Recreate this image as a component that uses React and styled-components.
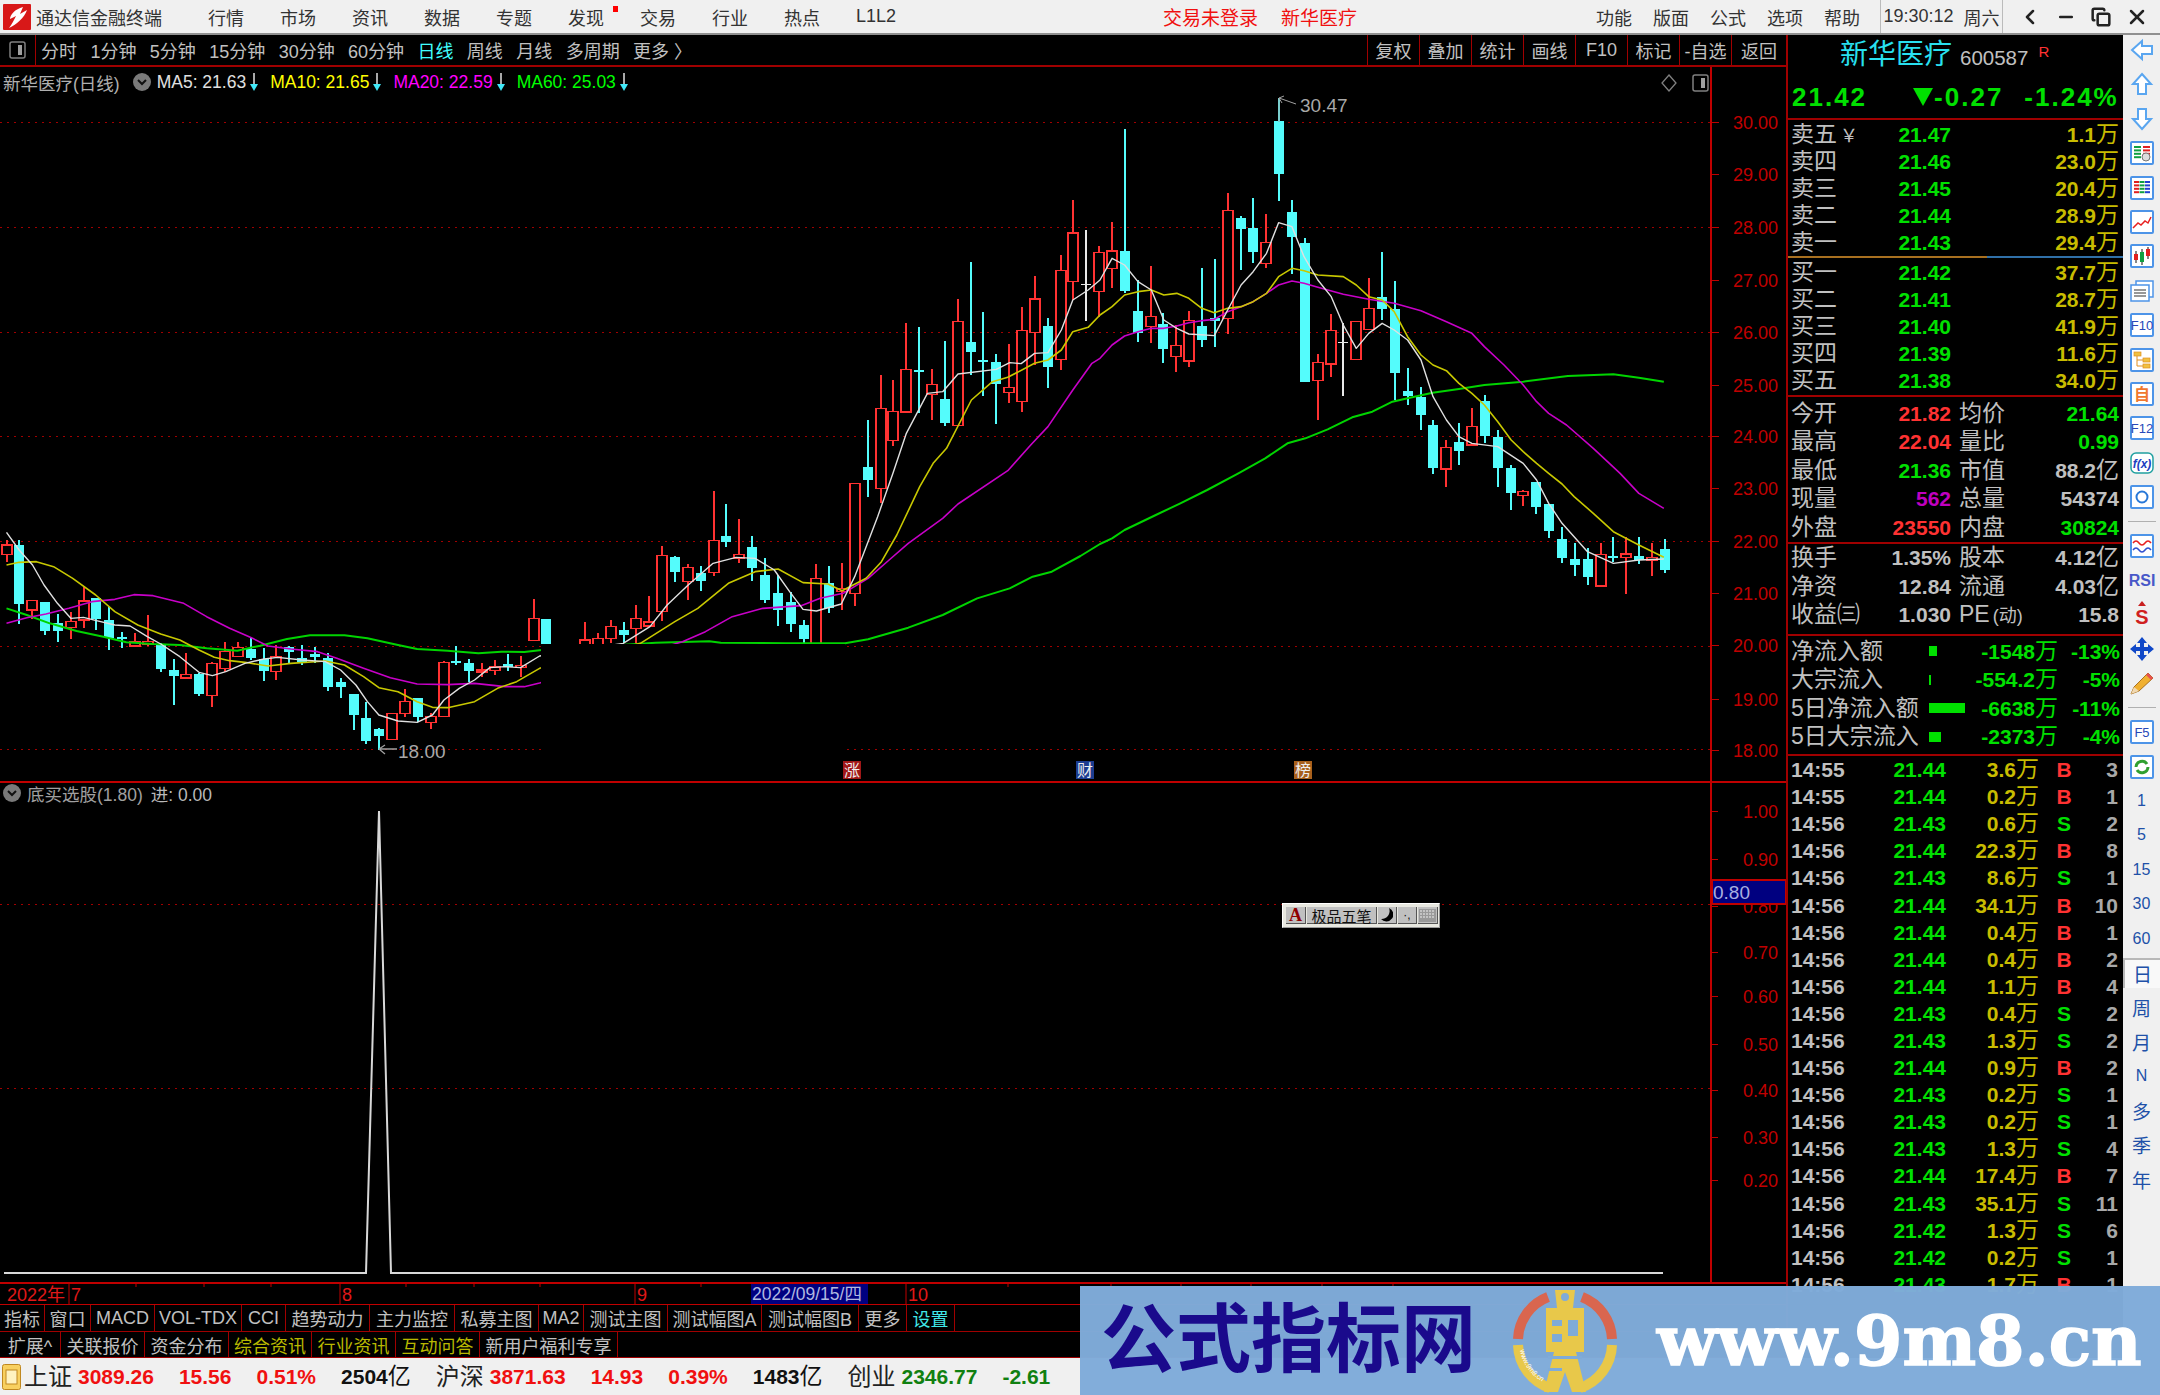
import React from "react";
import styled, { createGlobalStyle } from "styled-components";
import { ChevronLeft, Minus, Copy, X } from "lucide-react";

const FONT = `"Liberation Sans", "Noto Sans CJK SC", sans-serif`;
const RED_LINE = "#a00000";
const GRAY = "#c0c0c0";
const RED = "#ff3232";
const GREEN = "#00e000";
const GOLD = "#c8bc00";

const Global = createGlobalStyle`
  html, body { margin: 0; padding: 0; background: #000; overflow: hidden; }
  * { box-sizing: border-box; }
`;

const Page = styled.div`
  position: relative;
  width: 2160px;
  height: 1395px;
  display: flex;
  flex-direction: column;
  overflow: hidden;
  background: #000;
  font-family: ${FONT};
`;

/* title bar */
const TitleBar = styled.div`
  height: 35px;
  flex: none;
  display: flex;
  align-items: center;
  background: #f0f0f0;
  border-bottom: 2px solid #909090;
  color: #333;
  font-size: 18px;
  padding-left: 3px;
`;
const AppName = styled.span`
  margin-left: 5px;
`;
const Menu = styled.div`
  display: flex;
  align-items: center;
  gap: ${(p) => p.$gap}px;
  margin-left: ${(p) => p.$left}px;
`;
const MenuItem = styled.span`
  position: relative;
  &[data-dot]::after {
    content: "";
    position: absolute;
    right: -14px;
    top: 2px;
    width: 5px;
    height: 6px;
    background: #f00;
  }
`;
const Notice = styled.span`
  color: #f01010;
  font-size: 19px;
  margin-left: ${(p) => p.$left}px;
`;
const Clock = styled.div`
  margin-left: 20px;
  width: 123px;
  height: 33px;
  display: flex;
  align-items: center;
  justify-content: center;
  gap: 10px;
  border-left: 1px solid #bbb;
  border-right: 1px solid #bbb;
  font-size: 18px;
`;
const WindowButtons = styled.div`
  flex: 1;
  display: flex;
  justify-content: space-around;
  align-items: center;
  padding: 0 4px 0 8px;
  color: #222;
`;

/* main area */
const Middle = styled.div`
  height: 1323px;
  flex: none;
  display: flex;
`;
const LeftColumn = styled.div`
  position: relative;
  width: 1786px;
  flex: none;
  display: flex;
  flex-direction: column;
`;
const Toolbar = styled.div`
  height: 32px;
  flex: none;
  display: flex;
  border-bottom: 2px solid ${RED_LINE};
  color: ${GRAY};
  font-size: 18px;
`;
const PeriodIcon = styled.div`
  width: 36px;
  flex: none;
  display: flex;
  align-items: center;
  justify-content: center;
  border-right: 1px solid ${RED_LINE};
`;
const Periods = styled.div`
  display: flex;
  align-items: center;
  gap: 13.4px;
  margin-left: 5px;
`;
const Period = styled.span`
  color: ${(p) => (p.$active ? "#40ffff" : GRAY)};
`;
const ToolButtons = styled.div`
  margin-left: auto;
  display: flex;
`;
const ToolButton = styled.span`
  width: 52px;
  display: flex;
  align-items: center;
  justify-content: center;
  border-left: 1px solid ${RED_LINE};
  white-space: nowrap;
  &:last-child {
    width: 55px;
  }
`;

const Legend = styled.div`
  position: absolute;
  left: 3px;
  top: ${(p) => p.$top}px;
  display: flex;
  align-items: center;
  height: 24px;
  color: #b0b0b0;
  font-size: 17.5px;
  white-space: nowrap;
`;
const LegendValue = styled.span`
  display: flex;
  align-items: center;
  gap: 4px;
  margin-left: ${(p) => p.$gap}px;
  color: ${(p) => p.$color};
`;
const Chevron = styled.span`
  width: 18px;
  height: 18px;
  margin-left: ${(p) => p.$left}px;
  border-radius: 50%;
  background: #7a7a7a;
  display: flex;
  align-items: center;
  justify-content: center;
`;
const CornerIcons = styled.div`
  position: absolute;
  left: 1661px;
  top: 39px;
  display: flex;
  gap: 15px;
  align-items: center;
`;
const ChartSvg = styled.svg`
  display: block;
  flex: none;
`;
const IndicatorPane = styled.div`
  position: relative;
  flex: none;
  height: 501px;
`;
const ImeBar = styled.div`
  position: absolute;
  left: 1282px;
  top: 122px;
  width: 158px;
  height: 25px;
  padding: 3px;
  display: flex;
  gap: 1px;
  background: #e8e8e0;
  border: 1px solid #fff;
  border-right-color: #999;
  border-bottom-color: #999;
`;
const ImeCell = styled.span`
  width: ${(p) => p.$width}px;
  flex: none;
  display: flex;
  align-items: center;
  justify-content: center;
  background: #c0c0c0;
  border-right: 1px solid #555;
  border-bottom: 1px solid #555;
  font-size: ${(p) => p.$size || 15}px;
  font-weight: ${(p) => (p.$bold ? 700 : 400)};
  font-family: ${(p) => (p.$bold ? `"Liberation Serif", serif` : FONT)};
  color: ${(p) => p.$color || "#111"};
`;

const TabRow = styled.div`
  height: ${(p) => p.$height}px;
  flex: none;
  display: flex;
  border-bottom: 1px solid ${RED_LINE};
  font-size: 18px;
  white-space: nowrap;
`;
const Tab = styled.span`
  width: ${(p) => p.$width}px;
  display: flex;
  align-items: center;
  justify-content: center;
  border-right: 1px solid ${RED_LINE};
  color: ${(p) => p.$color || GRAY};
`;

/* quote panel */
const Panel = styled.div`
  width: 337px;
  flex: none;
  border-left: 2px solid ${RED_LINE};
  color: ${GRAY};
  font-size: 21px;
  line-height: 1;
  overflow: hidden;
`;
const PanelHeader = styled.div`
  height: 85px;
  border-bottom: 2px solid ${RED_LINE};
`;
const NameRow = styled.div`
  height: 40px;
  display: flex;
  align-items: center;
  padding-left: 52px;
`;
const StockName = styled.span`
  color: #28e0f0;
  font-size: 28px;
`;
const StockCode = styled.span`
  margin-left: 8px;
  font-size: 20.5px;
  position: relative;
  top: 3px;
`;
const RMark = styled.sup`
  margin-left: 10px;
  color: ${RED};
  font-size: 15px;
  position: relative;
  top: -4px;
`;
const PriceRow = styled.div`
  height: 43px;
  display: flex;
  align-items: center;
  color: ${GREEN};
  font-size: 26px;
  font-weight: 700;
  letter-spacing: 2px;
  padding-left: 4px;
`;
const PriceChange = styled.span`
  display: flex;
  align-items: center;
  margin-left: ${(p) => p.$left}px;
`;
const Section = styled.div`
  padding: ${(p) => p.$top || 0}px 0 ${(p) => p.$bottom || 0}px 3px;
  border-bottom: ${(p) => (p.$plain ? "none" : `2px solid ${RED_LINE}`)};
`;
const SplitLine = styled.div`
  height: 2px;
  background: linear-gradient(to right, #a87020 199px, #3070a8 199px);
`;
const Row = styled.div`
  height: ${(p) => p.$height}px;
  display: grid;
  grid-template-rows: ${(p) => p.$height}px;
  grid-template-columns: ${(p) => p.$columns};
  align-items: center;
  white-space: nowrap;
  font-weight: 700;
`;
const Label = styled.span`
  font-size: 23px;
  font-weight: 400;
  margin-left: ${(p) => p.$left || 0}px;
  color: ${GRAY};
  & small {
    font-size: 18px;
    margin-left: 3px;
  }
`;
const Value = styled.span`
  text-align: ${(p) => p.$align || "right"};
  color: ${(p) => p.$color || GRAY};
  font-size: 21px;
  & i {
    font-style: normal;
    font-weight: 400;
    font-size: 23px;
  }
`;
const FlowBar = styled.span`
  display: block;
  height: 10px;
  background: #00e000;
`;

/* side icons */
const SideBar = styled.div`
  width: 37px;
  flex: none;
  display: flex;
  flex-direction: column;
  align-items: center;
  gap: 4.4px;
  background: #f0f0f0;
  color: #2050a8;
`;
const SideItem = styled.div`
  width: 100%;
  height: 30px;
  flex: none;
  display: flex;
  align-items: center;
  justify-content: center;
  font-size: ${(p) => p.$size || 16}px;
  ${(p) =>
    p.$active &&
    `background:#f9f9f9;border-top:2px solid #b8b8b8;border-left:2px solid #b8b8b8;`}
`;
const SideSep = styled.div`
  height: 10px;
  width: 28px;
  flex: none;
  background: linear-gradient(#b0b0b0, #b0b0b0) center / 100% 1px no-repeat;
`;

/* status bar */
const StatusBar = styled.div`
  height: 37px;
  flex: none;
  display: flex;
  align-items: center;
  gap: 25px;
  background: #f0f0f0;
  padding-left: 2px;
  font-size: 21px;
  font-weight: 700;
  line-height: 1;
  white-space: nowrap;
  color: #111;
`;
const StatusGroup = styled.span`
  display: flex;
  align-items: center;
  gap: 6px;
`;
const StatusIcon = styled.svg`
  margin-right: -3px;
`;
const StatusLabel = styled.span`
  font-size: 24px;
  font-weight: 400;
  color: #222;
`;
const StatusValue = styled.span`
  color: ${(p) => p.$color || "#111"};
  & i {
    font-style: normal;
    font-weight: 400;
    font-size: 23px;
  }
`;

/* watermark over the bottom right */
const Watermark = styled.div`
  position: absolute;
  left: 1080px;
  top: 1286px;
  width: 1080px;
  height: 109px;
  display: flex;
  align-items: center;
  background: rgba(127, 171, 217, 0.98);
`;
const MarkTitle = styled.span`
  margin-left: 21px;
  width: 375px;
  flex: none;
  color: #1a0a8c;
  font-size: 75px;
  line-height: 1;
  font-weight: 700;
  white-space: nowrap;
`;
const MarkLogo = styled.svg`
  margin-left: 36px;
  flex: none;
`;
const MarkUrl = styled.span`
  margin-left: 39px;
  color: #fff;
  font-family: "DejaVu Serif", serif;
  font-size: 69.6px;
  line-height: 1;
  font-weight: 700;
  -webkit-text-stroke: 1.5px #fff;
  white-space: nowrap;
`;

/* chart data, traced per region: each region has its own x scale and y base */
const zoomed = (scaleX, baseX, baseY) => (pts) =>
  pts.map(([u, v]) => [u / scaleX + baseX, v / 3 + baseY]);
const west = zoomed(2.613, 0, 500);
const mid = zoomed(2.613, 560, 200);
const east = zoomed(2.24, 1100, 80);

const candleRows = (base, rows) =>
  rows.map(([k, t, b, h, l]) => ({
    kind: k,
    top: base + t / 3,
    bottom: base + b / 3,
    high: base + h / 3,
    low: base + l / 3,
  }));

const CANDLES = [
  ...candleRows(500, [
    ["r",135,163,120,185],["c",135,312,120,372],["r",302,330,302,358],["c",306,394,306,404],
    ["c",369,394,342,427],["r",365,382,335,417],["r",303,360,258,385],["c",293,358,293,390],
    ["c",360,415,320,450],["c",410,418,395,445],["r",425,438,400,440],["r",425,434,345,437],
    ["c",435,507,428,516],["c",509,528,476,615],["r",523,534,458,535],["c",521,583,518,587],
    ["r",491,587,487,620],["r",455,506,427,515],["r",442,470,427,470],["c",448,475,410,480],
    ["c",478,512,445,543],["r",470,515,435,540],["c",441,457,437,490],["c",473,485,435,495],
    ["c",463,472,440,490],["c",473,562,460,572],["c",545,561,535,593],["c",581,646,581,690],
    ["c",653,722,605,733],["c",688,708,685,750],["r",640,718,640,718],["r",604,640,568,650],
    ["c",594,652,594,665],["r",650,668,640,688],["r",487,650,483,652],["c",482,490,437,495],
    ["c",490,512,477,545],["r",510,515,490,530],["r",501,511,480,525],["c",492,500,463,513],
    ["r",497,503,467,530],["r",356,421,297,421],["c",356,432,356,432],
  ]),
  null,
  null,
  ...candleRows(200, [
    ["r",1320,1340,1265,1340],["r",1315,1340,1300,1340],["r",1279,1315,1260,1330],["c",1291,1304,1265,1330],
    ["r",1256,1285,1215,1330],["r",1266,1278,1188,1282],["r",1067,1235,1038,1262],["c",1071,1115,1067,1147],
    ["r",1103,1145,1093,1200],["c",1120,1142,1097,1173],["r",1022,1117,872,1128],["c",1007,1025,912,1042],
    ["r",1063,1075,958,1088],["c",1040,1105,1007,1142],["c",1125,1200,1075,1208],["c",1180,1231,1125,1277],
    ["c",1206,1272,1175,1295],["c",1274,1317,1260,1330],["r",1135,1340,1092,1340],["c",1148,1225,1098,1238],
    ["r",1165,1175,1088,1230],["r",851,1181,851,1218],["c",800,840,660,890],["r",626,865,526,910],
    ["r",635,722,540,737],["r",509,636,368,636],["c",509,516,382,640],["r",554,583,508,660],
    ["c",598,670,422,678],["r",365,677,296,677],["c",427,457,187,525],["c",481,485,337,588],
    ["c",485,551,463,673],["r",563,577,432,610],["r",392,604,320,637],["r",297,397,229,495],
    ["c",377,501,355,565],["r",212,479,166,511],["r",99,244,0,300],["w",253,253,90,362],
    ["r",158,275,138,350],
  ]),
  ...candleRows(80, [
    ["r",513,565,427,625],["c",513,632,147,640],["c",692,758,600,785],["r",710,740,557,790],
    ["c",733,808,700,850],["r",797,830,735,876],["r",722,843,692,862],["c",738,780,565,800],
    ["c",715,722,538,800],["r",392,716,340,763],["c",413,448,408,570],["c",445,515,354,548],
    ["r",487,550,403,565],["c",124,281,55,362],["c",395,470,360,583],["c",490,907,475,907],
    ["r",847,902,823,1020],["r",752,852,702,890],["w",788,788,730,948],["r",725,838,725,838],
    ["r",685,748,593,748],["c",652,686,517,720],["c",688,880,602,960],["c",932,947,863,975],
    ["c",950,1005,922,1050],["c",1035,1163,1020,1182],["r",1103,1167,1080,1222],["c",1085,1113,1030,1155],
    ["r",1040,1095,985,1095],["c",962,1068,945,1090],["c",1070,1163,1050,1222],["c",1165,1240,1155,1290],
    ["r",1234,1247,1230,1277],["c",1205,1280,1205,1303],["c",1273,1352,1273,1375],["c",1377,1433,1340,1448],
    ["c",1436,1455,1390,1488],["c",1436,1492,1405,1515],["r",1423,1518,1390,1518],["c",1427,1430,1372,1445],
    ["r",1422,1433,1372,1542],["c",1427,1440,1372,1452],["r",1432,1440,1390,1488],["c",1408,1470,1377,1478],
  ]),
];

const MA5 = [
  ...west([[17,97],[50,150],[85,195],[115,255],[150,310],[185,355],[218,352],[252,362],[300,375],[340,378],[385,410],[420,432],[470,470],[520,517],[555,527],[590,515],[640,490],[690,477],[725,472],[790,480],[850,485],[890,510],[930,555],[960,605],[990,645],[1040,663],[1090,667],[1130,645],[1160,600],[1200,565],[1240,540],[1280,503],[1320,500],[1360,503],[1410,468]]),
  ...mid([[165,1330],[235,1280],[280,1215],[335,1155],[400,1090],[460,1072],[510,1075],[560,1110],[600,1175],[635,1228],[670,1233],[735,1212],[770,1130],[830,950],[870,820],[905,700],[960,580],[1000,575],[1040,522],[1140,508],[1175,488],[1205,491],[1240,460],[1275,458],[1310,390],[1340,300],[1380,270]]),
  ...east([[0,600],[27,535],[55,555],[85,605],[115,630],[143,720],[172,745],[199,762],[256,767],[286,690],[316,615],[343,575],[373,520],[400,428],[430,440],[457,530],[488,600],[518,650],[545,735],[574,805],[602,760],[632,730],[659,750],[689,780],[719,840],[746,950],[776,1020],[804,1070],[833,1090],[891,1100],[948,1150],[978,1200],[1005,1270],[1035,1330],[1092,1415],[1150,1450],[1207,1440],[1263,1437]]),
];
const MA10 = [
  ...west([[17,195],[50,187],[95,185],[140,200],[190,235],[250,285],[300,335],[360,375],[420,402],[470,420],[520,450],[560,472],[600,482],[640,487],[700,498],[760,490],[850,483],[900,495],[950,530],[990,563],[1040,575],[1090,605],[1130,622],[1170,623],[1240,605],[1300,565],[1350,545],[1410,505]]),
  ...mid([[210,1330],[300,1265],[360,1225],[440,1150],[510,1115],[570,1107],[635,1148],[700,1152],[737,1172],[800,1135],[840,1085],[880,1005],[940,860],[975,790],[1010,745],[1075,600],[1130,545],[1170,532],[1240,490],[1275,480],[1310,450],[1340,395],[1380,382]]),
  ...east([[0,705],[27,680],[55,645],[85,635],[115,630],[143,645],[172,640],[199,655],[228,685],[256,698],[286,685],[316,680],[343,665],[373,640],[400,590],[430,565],[457,572],[488,585],[545,590],[574,615],[602,650],[632,660],[659,695],[689,770],[719,825],[746,855],[776,872],[804,910],[833,940],[861,975],[891,1025],[921,1080],[948,1115],[978,1150],[1005,1180],[1035,1212],[1062,1250],[1105,1300],[1150,1355],[1207,1395],[1263,1432]]),
];
const MA20 = [
  ...west([[17,370],[70,353],[120,342],[180,325],[240,305],[300,298],[350,284],[400,287],[480,310],[540,350],[600,385],[660,415],[700,438],[760,447],[830,455],[880,475],[950,505],[1020,533],[1090,552],[1170,554],[1240,550],[1320,560],[1370,560],[1410,549]]),
  ...mid([[320,1325],[380,1295],[450,1250],[530,1225],[630,1217],[680,1195],[740,1180],[805,1135],[860,1080],[910,1030],[1000,955],[1040,912],[1170,812],[1230,735],[1275,680],[1340,570],[1390,490]]),
  ...east([[0,835],[27,795],[55,768],[85,755],[115,745],[143,745],[172,738],[199,728],[228,722],[256,718],[286,695],[316,680],[343,665],[373,640],[400,615],[430,603],[457,610],[488,622],[545,643],[602,658],[659,670],[719,692],[776,725],[833,760],[861,800],[905,855],[948,915],[978,965],[1005,1000],[1045,1035],[1105,1105],[1165,1180],[1207,1240],[1263,1285]]),
];
const MA60 = [
  ...west([[17,325],[70,345],[130,370],[200,393],[270,410],[330,427],[400,432],[470,435],[540,445],[620,452],[680,437],[750,417],[810,406],[900,406],[960,415],[1040,435],[1090,447],[1170,452],[1250,460],[1310,455],[1370,456],[1410,451]]),
  ...mid([[250,1328],[390,1324],[420,1328],[590,1330],[745,1330],[805,1318],[910,1283],[1000,1245],[1090,1195],[1175,1165],[1235,1130],[1285,1115],[1360,1068]]),
  ...east([[0,1392],[27,1375],[55,1350],[125,1305],[180,1270],[240,1230],[310,1180],[370,1135],[420,1090],[460,1075],[510,1048],[565,1012],[610,995],[655,965],[689,955],[745,938],[804,927],[861,915],[948,905],[1048,888],[1150,883],[1207,893],[1263,905]]),
];
const LINES = [
  { pts: MA60, color: "#00d400", width: 2 },
  { pts: MA20, color: "#c800c8", width: 1.6 },
  { pts: MA10, color: "#c8c800", width: 1.6 },
  { pts: MA5, color: "#e0e0e0", width: 1.4 },
];

const PRICE_TICKS = [
  ["30.00",122],["29.00",174],["28.00",227],["27.00",280],["26.00",332],["25.00",385],["24.00",436],
  ["23.00",488],["22.00",541],["21.00",593],["20.00",645],["19.00",699],["18.00",750],
];
const GRID_Y = [122, 227, 332, 436, 541, 646, 749];
const INDICATOR_TICKS = [
  ["1.00",811],["0.90",859],["0.80",906],["0.70",952],["0.60",996],["0.50",1044],["0.40",1090],["0.30",1137],["0.20",1180],
];
const AXIS_RED = "#c00000";
const BADGES = [
  ["涨", 852, "#a01818"],
  ["财", 1085, "#1c3c90"],
  ["榜", 1303, "#a8601c"],
];

function Candle({ c, i }) {
  const x = Math.round(6.5 + 12.855 * i);
  const w = 10;
  const { kind, top, bottom, high, low } = c;
  const color = kind === "r" ? "#ff3232" : kind === "c" ? "#54fcfc" : "#e8e8e8";
  if (kind === "w") {
    return (
      <g stroke={color} strokeWidth="1.5" shapeRendering="crispEdges">
        <line x1={x} x2={x} y1={high} y2={low} />
        <line x1={x - 5} x2={x + 5} y1={top} y2={top} />
      </g>
    );
  }
  return (
    <g shapeRendering="crispEdges">
      <line x1={x} x2={x} y1={high} y2={top} stroke={color} strokeWidth="1.5" />
      <line x1={x} x2={x} y1={bottom} y2={low} stroke={color} strokeWidth="1.5" />
      <rect
        x={x - w / 2}
        y={top}
        width={w}
        height={Math.max(bottom - top, 2)}
        fill={kind === "c" ? color : "#000"}
        stroke={kind === "c" ? "none" : color}
        strokeWidth="1.5"
      />
    </g>
  );
}

function PriceChart() {
  return (
    <ChartSvg width="1786" height="714" viewBox="0 67 1786 714">
      {GRID_Y.map((y) => (
        <line key={y} x1="0" x2="1711" y1={y} y2={y} stroke="#a00000" strokeDasharray="2 5" shapeRendering="crispEdges" />
      ))}
      {CANDLES.map((c, i) => c && <Candle key={i} c={c} i={i} />)}
      {LINES.map((l) => (
        <polyline key={l.color} points={l.pts.map((p) => p.join(",")).join(" ")} fill="none" stroke={l.color} strokeWidth={l.width} strokeLinejoin="round" />
      ))}
      <rect x="541" y="644" width="304" height="116" fill="#000" />
      <path d="M1279 98 L1279 122 M1279 98 L1296 104 M1279 98 L1284 96 M1279 98 L1282 103" stroke="#a0a0a0" fill="none" />
      <text x="1300" y="112" fill="#a8a8a8" fontSize="19" fontFamily={FONT}>30.47</text>
      <path d="M379 749 L397 749 M379 749 L385 745 M379 749 L385 754" stroke="#a0a0a0" fill="none" strokeWidth="1.3" />
      <text x="398" y="758" fill="#a8a8a8" fontSize="19" fontFamily={FONT}>18.00</text>
      {BADGES.map(([t, x, bg]) => (
        <g key={t}>
          <rect x={x - 9} y="761" width="18" height="18" fill={bg} />
          <text x={x} y="776" textAnchor="middle" fill="#eee" fontSize="16" fontFamily={FONT}>{t}</text>
        </g>
      ))}
      <line x1="1711" x2="1711" y1="67" y2="781" stroke={AXIS_RED} strokeWidth="2" />
      {PRICE_TICKS.map(([t, y]) => (
        <g key={t}>
          <line x1="1711" x2="1719" y1={y} y2={y} stroke={AXIS_RED} shapeRendering="crispEdges" />
          <text x="1778" y={y + 7} textAnchor="end" fill={AXIS_RED} fontSize="18" fontFamily={FONT}>{t}</text>
        </g>
      ))}
    </ChartSvg>
  );
}

function IndicatorChart() {
  return (
    <ChartSvg width="1786" height="501" viewBox="0 781 1786 501">
      <line x1="0" x2="1786" y1="782" y2="782" stroke={AXIS_RED} strokeWidth="2" />
      {[904, 1088].map((y) => (
        <line key={y} x1="0" x2="1711" y1={y} y2={y} stroke="#a00000" strokeDasharray="2 5" shapeRendering="crispEdges" />
      ))}
      <polyline points="4,1273 366,1273 379,811 391,1273 1663,1273" fill="none" stroke="#d8d8d8" strokeWidth="2" />
      <line x1="1711" x2="1711" y1="781" y2="1282" stroke={AXIS_RED} strokeWidth="2" />
      {INDICATOR_TICKS.map(([t, y]) => (
        <g key={t}>
          <line x1="1711" x2="1718" y1={y} y2={y} stroke={AXIS_RED} shapeRendering="crispEdges" />
          <text x="1778" y={y + 7} textAnchor="end" fill={AXIS_RED} fontSize="18" fontFamily={FONT}>{t}</text>
        </g>
      ))}
      <rect x="1712" y="880" width="74" height="24" fill="#000080" stroke={AXIS_RED} strokeWidth="2" />
      <text x="1713" y="899" fill="#a8b0e0" fontSize="19" fontFamily={FONT}>0.80</text>
    </ChartSvg>
  );
}

const DATE_TICKS = [136, 204, 271, 406, 474, 540, 701, 1008, 1111, 1181, 1251, 1322, 1393];
const DATE_MARKS = [["7", 69], ["8", 340], ["9", 635], ["10", 906]];

function DateAxis() {
  return (
    <ChartSvg width="1786" height="23" viewBox="0 1282 1786 23">
      <line x1="0" x2="1786" y1="1283" y2="1283" stroke={AXIS_RED} strokeWidth="2" />
      <line x1="0" x2="1786" y1="1304.5" y2="1304.5" stroke={AXIS_RED} />
      {DATE_TICKS.map((x) => (
        <line key={x} x1={x} x2={x} y1="1283" y2="1287" stroke={AXIS_RED} />
      ))}
      <text x="7" y="1301" fill="#e01818" fontSize="18" fontFamily={FONT}>2022年</text>
      {DATE_MARKS.map(([t, x]) => (
        <g key={t}>
          <line x1={x} x2={x} y1="1283" y2="1304" stroke={AXIS_RED} />
          <text x={x + 2} y="1301" fill="#e01818" fontSize="18" fontFamily={FONT}>{t}</text>
        </g>
      ))}
      <rect x="751" y="1284" width="117" height="20" fill="#000080" />
      <text x="752" y="1300" fill="#b0b8e0" fontSize="17.5" fontFamily={FONT}>2022/09/15/四</text>
    </ChartSvg>
  );
}

const PanelIcon = () => (
  <svg width="17" height="18" viewBox="0 0 17 18">
    <rect x="1" y="1" width="15" height="16" rx="2" fill="none" stroke="#808080" strokeWidth="1.5" />
    <rect x="9" y="4" width="4" height="10" fill="#a0a0a0" />
  </svg>
);

const DownArrow = () => (
  <svg width="8" height="20" viewBox="0 0 8 20">
    <line x1="4" x2="4" y1="1" y2="13" stroke="#e0e0e0" strokeWidth="1.5" />
    <path d="M0 12 H8 L4 19 Z" fill="#40e8f8" />
  </svg>
);

const ChevronDown = () => (
  <svg width="12" height="12" viewBox="0 0 12 12">
    <path d="M2 4 L6 8 L10 4" fill="none" stroke="#111" strokeWidth="2" />
  </svg>
);

const DropTriangle = () => (
  <svg width="21" height="20" viewBox="0 0 21 20">
    <path d="M0 1 H20 L10 19 Z" fill={GREEN} />
  </svg>
);

/* side bar drawings */
const Frame = ({ children, width = 24, height = 24 }) => (
  <svg width={width} height={height} viewBox="0 0 24 24">
    <rect x="1" y="1" width="22" height="22" rx="1" fill="#fff" stroke="#4d94e8" strokeWidth="2" />
    {children}
  </svg>
);
const Arrow = ({ d }) => (
  <svg width="24" height="24" viewBox="0 0 24 24">
    <path d={d} fill="#fff" stroke="#5aa6f0" strokeWidth="2" strokeLinejoin="miter" />
  </svg>
);
const Rows = ({ x, color, n = 4, w = 5 }) =>
  Array.from({ length: n }, (_, i) => (
    <rect key={i} x={x} y={5 + i * 3.4} width={w} height="2" fill={color} />
  ));
const FKey = ({ t }) => (
  <Frame>
    <text x="12" y="17" textAnchor="middle" fontSize="13" fill="#2848b8" fontFamily={FONT}>{t}</text>
  </Frame>
);

const SIDE_TOP = [
  <Arrow d="M2 12 L12 3 V8 H22 V16 H12 V21 Z" />,
  <Arrow d="M12 2 L21 12 H16 V22 H8 V12 H3 Z" />,
  <Arrow d="M12 22 L21 12 H16 V2 H8 V12 H3 Z" />,
  <Frame>
    <Rows x={4} color="#10a040" w={7} />
    <Rows x={13} color="#e02020" w={7} />
    <circle cx="16" cy="16" r="4" fill="#ddd" stroke="#777" />
  </Frame>,
  <Frame>
    <Rows x={4} color="#e02020" />
    <Rows x={9.5} color="#10a040" />
    <Rows x={15} color="#2040d0" />
  </Frame>,
  <Frame>
    <path d="M3 18 L8 13 L11 15 L15 11 L18 13 L21 7" fill="none" stroke="#e82020" strokeWidth="1.5" />
  </Frame>,
  <Frame>
    <path d="M6 7 V19 M12 5 V21 M18 3 V15" stroke="#111" />
    <rect x="4" y="10" width="4" height="6" fill="#e02020" />
    <rect x="10" y="8" width="4" height="10" fill="#10a040" />
    <rect x="16" y="5" width="4" height="7" fill="#e02020" />
  </Frame>,
  <svg width="24" height="24" viewBox="0 0 24 24">
    <rect x="6" y="2" width="17" height="16" fill="#fff" stroke="#4d94e8" strokeWidth="1.5" />
    <rect x="1" y="6" width="18" height="16" fill="#fff" stroke="#4d94e8" strokeWidth="1.5" />
    <path d="M4 11 H16 M4 14 H16 M4 17 H16" stroke="#777" strokeWidth="1.5" />
  </svg>,
  <FKey t="F10" />,
  <Frame>
    <rect x="4" y="4" width="7" height="4" fill="#f0c040" stroke="#e09020" strokeWidth=".7" />
    <rect x="13" y="10" width="7" height="4" fill="#f0c040" stroke="#e09020" strokeWidth=".7" />
    <rect x="13" y="16" width="7" height="4" fill="#f0c040" stroke="#e09020" strokeWidth=".7" />
    <path d="M7 8 V18 H13 M7 12 H13" fill="none" stroke="#e09020" />
  </Frame>,
  <Frame>
    <text x="12" y="18" textAnchor="middle" fontSize="16" fontWeight="700" fill="#f07830" fontFamily={FONT}>自</text>
  </Frame>,
  <FKey t="F12" />,
  <svg width="24" height="24" viewBox="0 0 24 24">
    <rect x="1" y="2" width="22" height="20" rx="5" fill="#fff" stroke="#20a0a0" strokeWidth="1.5" />
    <text x="12" y="17" textAnchor="middle" fontSize="12" fontStyle="italic" fontWeight="700" fill="#2040c0" fontFamily={FONT}>f(x)</text>
  </svg>,
  <Frame>
    <circle cx="12" cy="12" r="5.5" fill="none" stroke="#2878d8" strokeWidth="2" />
  </Frame>,
];
const SIDE_MID = [
  <Frame>
    <path d="M3 9 Q6 5 9 9 T15 9 T21 9" fill="none" stroke="#e82020" strokeWidth="1.5" />
    <path d="M3 16 Q6 12 9 16 T15 16 T21 16" fill="none" stroke="#3050d0" strokeWidth="1.5" />
  </Frame>,
  <svg width="28" height="24" viewBox="0 0 28 24">
    <text x="14" y="18" textAnchor="middle" fontSize="16" fontWeight="700" fill="#4858c8" fontFamily={FONT}>RSI</text>
  </svg>,
  <svg width="24" height="28" viewBox="0 0 24 28">
    <path d="M12 0 L16 5 H8 Z" fill="#c82020" />
    <text x="12" y="23" textAnchor="middle" fontSize="20" fontWeight="700" fill="#d02020" fontFamily={FONT}>S</text>
  </svg>,
  <svg width="26" height="26" viewBox="0 0 26 26">
    <path d="M13 1 L18 7 H15 V11 H19 V8 L25 13 L19 18 V15 H15 V19 H18 L13 25 L8 19 H11 V15 H7 V18 L1 13 L7 8 V11 H11 V7 H8 Z" fill="#1048c8" />
  </svg>,
  <svg width="26" height="26" viewBox="0 0 26 26">
    <path d="M2 24 L5 17 L19 3 L24 8 L10 21 Z" fill="#f0b030" stroke="#a87020" strokeWidth="1" />
    <path d="M2 24 L5 17 L10 21 Z" fill="#f0d8b0" />
    <path d="M19 3 L24 8 L22 10 L17 5 Z" fill="#e85050" />
  </svg>,
];
const SIDE_LOW = [
  <FKey t="F5" />,
  <Frame>
    <path d="M6 12 A6 6 0 0 1 17 9 M18 12 A6 6 0 0 1 7 15" fill="none" stroke="#30a030" strokeWidth="3" />
  </Frame>,
];
const SIDE_TEXT = [
  ["1"], ["5"], ["15"], ["30"], ["60"], ["日", 19, true], ["周", 19], ["月", 19], ["N"], ["多", 19], ["季", 19], ["年", 19],
];

const TITLE_MENU = ["行情", "市场", "资讯", "数据", "专题", "发现", "交易", "行业", "热点", "L1L2"];
const RIGHT_MENU = ["功能", "版面", "公式", "选项", "帮助"];
const PERIODS = ["分时", "1分钟", "5分钟", "15分钟", "30分钟", "60分钟", "日线", "周线", "月线", "多周期", "更多 〉"];
const TOOLS = ["复权", "叠加", "统计", "画线", "F10", "标记", "-自选", "返回"];
const TABS_A = [
  ["指标",45],["窗口",46],["MACD",64],["VOL-TDX",87],["CCI",44],["趋势动力",84],["主力监控",85],["私募主图",84],
  ["MA2",45],["测试主图",84],["测试幅图A",94],["测试幅图B",97],["更多",48],["设置",48,"#40e8e8"],
];
const TABS_B = [
  ["扩展^",61],["关联报价",84],["资金分布",84],["综合资讯",83,"#b8b800"],["行业资讯",84,"#b8b800"],["互动问答",84,"#b8b800"],["新用户福利专享",138],
];

const QUOTE_COLS = "58px 102px 168px";
const ASKS = [
  [<>卖五<small>￥</small></>, "21.47", "1.1"],
  ["卖四", "21.46", "23.0"],
  ["卖三", "21.45", "20.4"],
  ["卖二", "21.44", "28.9"],
  ["卖一", "21.43", "29.4"],
];
const BIDS = [
  ["买一", "21.42", "37.7"],
  ["买二", "21.41", "28.7"],
  ["买三", "21.40", "41.9"],
  ["买四", "21.39", "11.6"],
  ["买五", "21.38", "34.0"],
];
const STATS_COLS = "58px 102px 66px 102px";
const STATS_A = [
  ["今开", "21.82", RED, "均价", "21.64", GREEN],
  ["最高", "22.04", RED, "量比", "0.99", GREEN],
  ["最低", "21.36", GREEN, "市值", "88.2亿", GRAY],
  ["现量", "562", "#c000c0", "总量", "54374", GRAY],
  ["外盘", "23550", RED, "内盘", "30824", GREEN],
];
const STATS_B = [
  ["换手", "1.35%", GRAY, "股本", "4.12亿", GRAY],
  ["净资", "12.84", GRAY, "流通", "4.03亿", GRAY],
  ["收益㈢", "1.030", GRAY, <>PE<small>(动)</small></>, "15.8", GRAY],
];
const FLOW = [
  ["净流入额", 8, "-1548", "-13%"],
  ["大宗流入", 2, "-554.2", "-5%"],
  ["5日净流入额", 36, "-6638", "-11%"],
  ["5日大宗流入", 12, "-2373", "-4%"],
];
const TRADES = [
  ["14:55","21.44","3.6","B","3"],["14:55","21.44","0.2","B","1"],["14:56","21.43","0.6","S","2"],
  ["14:56","21.44","22.3","B","8"],["14:56","21.43","8.6","S","1"],["14:56","21.44","34.1","B","10"],
  ["14:56","21.44","0.4","B","1"],["14:56","21.44","0.4","B","2"],["14:56","21.44","1.1","B","4"],
  ["14:56","21.43","0.4","S","2"],["14:56","21.43","1.3","S","2"],["14:56","21.44","0.9","B","2"],
  ["14:56","21.43","0.2","S","1"],["14:56","21.43","0.2","S","1"],["14:56","21.43","1.3","S","4"],
  ["14:56","21.44","17.4","B","7"],["14:56","21.43","35.1","S","11"],["14:56","21.42","1.3","S","6"],
  ["14:56","21.42","0.2","S","1"],["14:56","21.43","1.7","B","1"],
];

const Wan = ({ v }) => (
  <Value $color={GOLD}>
    {v}
    <i>万</i>
  </Value>
);

function splitYi(v) {
  return v.endsWith("亿") ? <>{v.slice(0, -1)}<i>亿</i></> : v;
}

function QuoteRows({ rows }) {
  return rows.map(([label, price, vol], i) => (
    <Row key={i} $height={27} $columns={QUOTE_COLS}>
      <Label>{label}</Label>
      <Value $color={GREEN}>{price}</Value>
      <Wan v={vol} />
    </Row>
  ));
}

function StatRows({ rows }) {
  return rows.map(([a, av, ac, b, bv, bc]) => (
    <Row key={a} $height={28.5} $columns={STATS_COLS}>
      <Label>{a}</Label>
      <Value $color={ac}>{av}</Value>
      <Label $left={8}>{b}</Label>
      <Value $color={bc}>{splitYi(bv)}</Value>
    </Row>
  ));
}

function Logo() {
  return (
    <svg width="28" height="26" viewBox="0 0 28 26">
      <rect width="28" height="26" rx="1" fill="#d81818" />
      <path d="M20 3 C12 5 7 11 7 15 L13 12 C11 16 9 20 6 24 C14 20 21 14 24 6 L17 10 Z" fill="#fff" />
    </svg>
  );
}

function MarkEmblem() {
  return (
    <MarkLogo width="106" height="106" viewBox="0 0 106 106">
      <path d="M36 9 A47 47 0 0 0 6 51" fill="none" stroke="#d9664f" strokeWidth="10" />
      <path d="M70 9 A47 47 0 0 1 100 51" fill="none" stroke="#d9664f" strokeWidth="10" />
      <path d="M6 57 A47 47 0 0 0 38 100" fill="none" stroke="#e8c84a" strokeWidth="10" />
      <path d="M100 57 A47 47 0 0 1 68 100" fill="none" stroke="#e8c84a" strokeWidth="10" />
      <path d="M43 2 H63 L61 20 H72 V64 H64 L74 104 H60 L53 84 L46 104 H32 L42 64 H34 V20 H45 Z" fill="#e8c84a" />
      <circle cx="53" cy="9" r="4" fill="#7fabd9" />
      <path d="M40 32 H50 V38 H40 Z M56 32 H66 V48 H56 Z M40 46 H50 V54 H40 Z M36 68 H70 V71 H36 Z M36 80 H50 V83 H36 Z" fill="#7fabd9" />
      <path id="wm" d="M8 62 A46 46 0 0 0 40 98" fill="none" />
      <text fontSize="7" fill="#fff" fontFamily={FONT}>
        <textPath href="#wm">www.9m8.cn</textPath>
      </text>
    </MarkLogo>
  );
}

export default function App() {
  return (
    <Page>
      <Global />
      <TitleBar>
        <Logo />
        <AppName>通达信金融终端</AppName>
        <Menu $left={46} $gap={36}>
          {TITLE_MENU.map((m) => (
            <MenuItem key={m} data-dot={m === "发现" ? true : undefined}>{m}</MenuItem>
          ))}
        </Menu>
        <Notice $left={267}>交易未登录</Notice>
        <Notice $left={23}>新华医疗</Notice>
        <Menu $left={239} $gap={21}>
          {RIGHT_MENU.map((m) => (
            <MenuItem key={m}>{m}</MenuItem>
          ))}
        </Menu>
        <Clock>
          <span>19:30:12</span>
          <span>周六</span>
        </Clock>
        <WindowButtons>
          <ChevronLeft size={24} strokeWidth={2.5} />
          <Minus size={20} strokeWidth={3} />
          <Copy size={20} strokeWidth={3} />
          <X size={24} strokeWidth={2.5} />
        </WindowButtons>
      </TitleBar>

      <Middle>
        <LeftColumn>
          <Toolbar>
            <PeriodIcon>
              <PanelIcon />
            </PeriodIcon>
            <Periods>
              {PERIODS.map((p) => (
                <Period key={p} $active={p === "日线"}>{p}</Period>
              ))}
            </Periods>
            <ToolButtons>
              {TOOLS.map((t) => (
                <ToolButton key={t}>{t}</ToolButton>
              ))}
            </ToolButtons>
          </Toolbar>

          <PriceChart />
          <Legend $top={35}>
            新华医疗(日线)
            <Chevron $left={13}>
              <ChevronDown />
            </Chevron>
            <LegendValue $gap={6} $color="#e0e0e0">MA5: 21.63<DownArrow /></LegendValue>
            <LegendValue $gap={12} $color="#ffff00">MA10: 21.65<DownArrow /></LegendValue>
            <LegendValue $gap={12} $color="#ff00ff">MA20: 22.59<DownArrow /></LegendValue>
            <LegendValue $gap={12} $color="#00ff00">MA60: 25.03<DownArrow /></LegendValue>
          </Legend>
          <CornerIcons>
            <svg width="16" height="18" viewBox="0 0 16 18">
              <path d="M8 1 L15 9 L8 17 L1 9 Z" fill="none" stroke="#808080" strokeWidth="1.3" />
            </svg>
            <PanelIcon />
          </CornerIcons>

          <IndicatorPane>
            <IndicatorChart />
            <Legend $top={0}>
              <Chevron $left={0}>
                <ChevronDown />
              </Chevron>
              <LegendValue $gap={6} $color="#a0a0a0">底买选股(1.80)</LegendValue>
              <LegendValue $gap={8} $color="#b8b8b8">进: 0.00</LegendValue>
            </Legend>
            <ImeBar>
              <ImeCell $width={20} $size={18} $bold $color="#900000">A</ImeCell>
              <ImeCell $width={70}>极品五笔</ImeCell>
              <ImeCell $width={19}>
                <svg width="12" height="14" viewBox="0 0 12 14">
                  <path d="M8 0 A7 7 0 1 1 0 11 A8 8 0 0 0 8 0 Z" fill="#000" />
                </svg>
              </ImeCell>
              <ImeCell $width={19} $size={12}>·,</ImeCell>
              <ImeCell $width={20}>
                <svg width="17" height="13" viewBox="0 0 17 13">
                  <rect width="17" height="13" fill="#999" />
                  <path d="M1 2 H16 M1 5 H16 M1 8 H16" stroke="#eee" strokeDasharray="2 1" />
                </svg>
              </ImeCell>
            </ImeBar>
          </IndicatorPane>

          <DateAxis />
          <TabRow $height={27}>
            {TABS_A.map(([t, w, c]) => (
              <Tab key={t} $width={w} $color={c}>{t}</Tab>
            ))}
          </TabRow>
          <TabRow $height={26}>
            {TABS_B.map(([t, w, c]) => (
              <Tab key={t} $width={w} $color={c}>{t}</Tab>
            ))}
          </TabRow>
        </LeftColumn>

        <Panel>
          <PanelHeader>
            <NameRow>
              <StockName>新华医疗</StockName>
              <StockCode>600587</StockCode>
              <RMark>R</RMark>
            </NameRow>
            <PriceRow>
              <span>21.42</span>
              <PriceChange $left={46}><DropTriangle />-0.27</PriceChange>
              <PriceChange $left={21}>-1.24%</PriceChange>
            </PriceRow>
          </PanelHeader>
          <Section $top={1} $plain>
            <QuoteRows rows={ASKS} />
          </Section>
          <SplitLine />
          <Section $top={1} $bottom={1}>
            <QuoteRows rows={BIDS} />
          </Section>
          <Section $top={2}>
            <StatRows rows={STATS_A} />
          </Section>
          <Section $bottom={5}>
            <StatRows rows={STATS_B} />
          </Section>
          <Section $top={1} $bottom={3}>
            {FLOW.map(([label, bar, v, pct]) => (
              <Row key={label} $height={28.5} $columns="138px 40px 89px 62px">
                <Label>{label}</Label>
                <FlowBar style={{ width: bar }} />
                <Value $color={GREEN}>{v}<i>万</i></Value>
                <Value $color={GREEN}>{pct}</Value>
              </Row>
            ))}
          </Section>
          <Section $plain>
            {TRADES.map(([time, price, vol, side, n], i) => (
              <Row key={i} $height={27.1} $columns="60px 95px 93px 50px 29px">
                <Value $align="left">{time}</Value>
                <Value $color={GREEN}>{price}</Value>
                <Wan v={vol} />
                <Value $align="center" $color={side === "B" ? RED : GREEN}>{side}</Value>
                <Value $color="#a8a8a8">{n}</Value>
              </Row>
            ))}
          </Section>
        </Panel>

        <SideBar>
          {SIDE_TOP.map((icon, i) => (
            <SideItem key={i}>{icon}</SideItem>
          ))}
          <SideSep />
          {SIDE_MID.map((icon, i) => (
            <SideItem key={i}>{icon}</SideItem>
          ))}
          <SideSep />
          {SIDE_LOW.map((icon, i) => (
            <SideItem key={i}>{icon}</SideItem>
          ))}
          {SIDE_TEXT.map(([t, size, active]) => (
            <SideItem key={t} $size={size} $active={active}>{t}</SideItem>
          ))}
        </SideBar>
      </Middle>

      <StatusBar>
        <StatusGroup>
          <StatusIcon width="19" height="26" viewBox="0 0 19 26">
            <rect x="0.5" y="0.5" width="18" height="25" rx="2" fill="#f8d060" stroke="#c08820" />
            <rect x="4" y="6" width="11" height="14" fill="#fff2c0" stroke="#c08820" />
          </StatusIcon>
          <StatusLabel>上证</StatusLabel>
          <StatusValue $color="#f01010">3089.26</StatusValue>
        </StatusGroup>
        <StatusValue $color="#f01010">15.56</StatusValue>
        <StatusValue $color="#f01010">0.51%</StatusValue>
        <StatusValue>2504<i>亿</i></StatusValue>
        <StatusGroup>
          <StatusLabel>沪深</StatusLabel>
          <StatusValue $color="#f01010">3871.63</StatusValue>
        </StatusGroup>
        <StatusValue $color="#f01010">14.93</StatusValue>
        <StatusValue $color="#f01010">0.39%</StatusValue>
        <StatusValue>1483<i>亿</i></StatusValue>
        <StatusGroup>
          <StatusLabel>创业</StatusLabel>
          <StatusValue $color="#108010">2346.77</StatusValue>
        </StatusGroup>
        <StatusValue $color="#108010">-2.61</StatusValue>
      </StatusBar>

      <Watermark>
        <MarkTitle>公式指标网</MarkTitle>
        <MarkEmblem />
        <MarkUrl>www.9m8.cn</MarkUrl>
      </Watermark>
    </Page>
  );
}
